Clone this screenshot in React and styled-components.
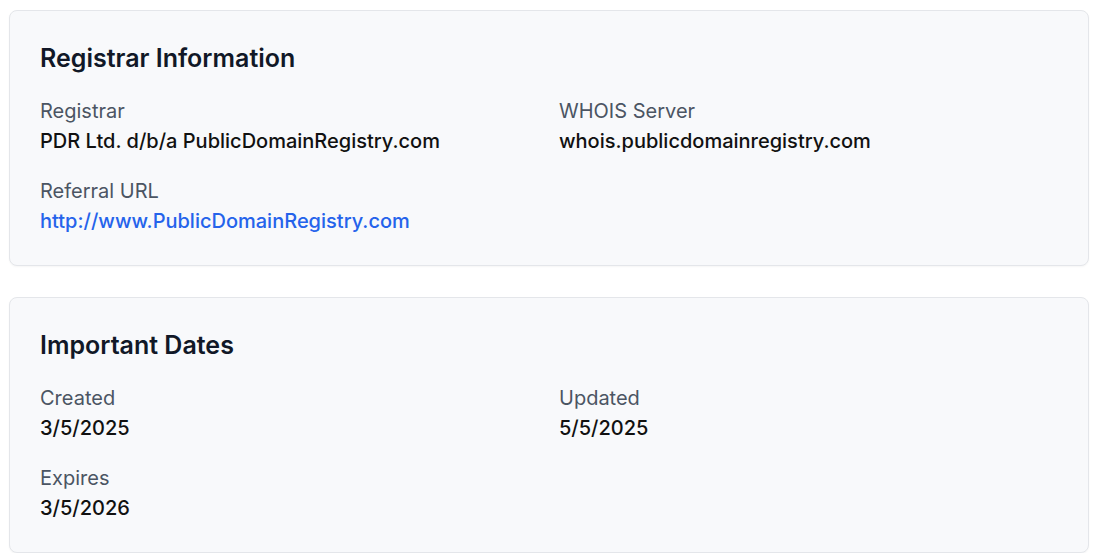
import React from 'react';
import styled, { createGlobalStyle } from 'styled-components';

const GlobalStyle = createGlobalStyle`
  body {
    margin: 0;
    background: #ffffff;
    font-family: Inter, "Noto Sans", sans-serif;
  }
`;

const Page = styled.div`
  display: flex;
  flex-direction: column;
  gap: 31px;
  padding: 10px 6px 0 9px;
`;

const Card = styled.section`
  background: #f8f9fb;
  border: 1px solid #e4e6ea;
  border-radius: 8px;
  box-shadow: 0 1px 2px rgba(0, 0, 0, 0.04);
  padding: 30px;
`;

const Title = styled.h2`
  margin: 0 0 22px;
  font-size: 25px;
  line-height: 34px;
  font-weight: 600;
  color: #111827;
`;

const Grid = styled.div`
  display: grid;
  grid-template-columns: 1fr 1fr;
  column-gap: 20px;
  row-gap: 22px;
`;

const Field = styled.div`
  display: flex;
  flex-direction: column;
  gap: 2px;
`;

const Label = styled.div`
  font-size: 20px;
  line-height: 28px;
  color: #4b5563;
`;

const Value = styled.div`
  font-size: 20px;
  line-height: 28px;
  font-weight: 500;
  color: ${(p) => (p.$link ? '#2563eb' : '#111111')};
`;

const InfoCard = ({ title, fields }) => (
  <Card>
    <Title>{title}</Title>
    <Grid>
      {fields.map((f) => (
        <Field key={f.label}>
          <Label>{f.label}</Label>
          <Value $link={f.link}>{f.value}</Value>
        </Field>
      ))}
    </Grid>
  </Card>
);

const App = () => (
  <>
    <GlobalStyle />
    <Page>
      <InfoCard
        title="Registrar Information"
        fields={[
          { label: 'Registrar', value: 'PDR Ltd. d/b/a PublicDomainRegistry.com' },
          { label: 'WHOIS Server', value: 'whois.publicdomainregistry.com' },
          { label: 'Referral URL', value: 'http://www.PublicDomainRegistry.com', link: true },
        ]}
      />
      <InfoCard
        title="Important Dates"
        fields={[
          { label: 'Created', value: '3/5/2025' },
          { label: 'Updated', value: '5/5/2025' },
          { label: 'Expires', value: '3/5/2026' },
        ]}
      />
    </Page>
  </>
);

export default App;
